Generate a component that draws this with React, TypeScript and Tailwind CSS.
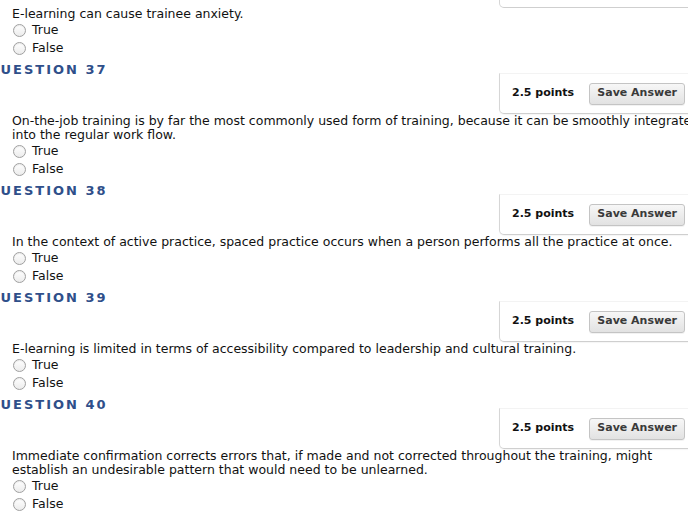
import React from "react";

type Q = { num: number; text: string[] };

const questions: Q[] = [
  {
    num: 37,
    text: [
      "On-the-job training is by far the most commonly used form of training, because it can be smoothly integrated",
      "into the regular work flow.",
    ],
  },
  {
    num: 38,
    text: [
      "In the context of active practice, spaced practice occurs when a person performs all the practice at once.",
    ],
  },
  {
    num: 39,
    text: [
      "E-learning is limited in terms of accessibility compared to leadership and cultural training.",
    ],
  },
  {
    num: 40,
    text: [
      "Immediate confirmation corrects errors that, if made and not corrected throughout the training, might",
      "establish an undesirable pattern that would need to be unlearned.",
    ],
  },
];

function Radio({ label, first }: { label: string; first?: boolean }) {
  return (
    <div className={`flex items-center h-[18px] pl-[13px] ${first ? "mt-[-1px]" : ""}`}>
      <span className="inline-block w-[13px] h-[13px] rounded-full border border-[#a0a0a0] bg-gradient-to-b from-[#ffffff] to-[#ececec] shadow-[inset_0_1px_1px_rgba(0,0,0,0.08)] shrink-0" />
      <span className="ml-[6px] leading-[18px]">{label}</span>
    </div>
  );
}

function QuestionText({ lines, top }: { lines: string[]; top?: boolean }) {
  return (
    <div className={`pl-[12px] leading-[14px] whitespace-nowrap ${top ? "mt-[-1px]" : ""}`}>
      {lines.map((l, i) => (
        <div key={i}>{l}</div>
      ))}
    </div>
  );
}

function PointsBox() {
  return (
    <div className="ml-[499px] mt-[-5px] h-[41px] w-[220px] border-l border-b border-t border-l-[#d6d6d6] border-b-[#cfcfcf] border-t-[#f3f3f3] rounded-bl-[5px] flex items-center pl-[12px] shadow-[0_1px_1px_rgba(0,0,0,0.04)]">
      <span className="font-bold text-[11px] text-[#111]">2.5 points</span>
      <button className="ml-[15px] h-[22px] w-[96px] rounded-[3px] border border-[#c4c4c4] bg-gradient-to-b from-[#f7f7f7] to-[#e2e2e2] font-bold text-[11px] text-[#3a3a3a] flex items-center justify-center shadow-[0_1px_0_rgba(0,0,0,0.05)]">
        Save Answer
      </button>
    </div>
  );
}

function Heading({ num }: { num: number }) {
  return (
    <div className="mt-[5px] h-[16px] leading-[16px] ml-[-12.5px] font-bold text-[13px] tracking-[2px] text-[#2f4f8a] whitespace-nowrap">
      QUESTION {num}
    </div>
  );
}

export default function App() {
  return (
    <div
      className="w-[688px] h-[528px] overflow-hidden bg-white text-[12.5px] text-[#111]"
      style={{ fontFamily: '"DejaVu Sans", "Liberation Sans", sans-serif' }}
    >
      <div className="ml-[499px] h-[8px] w-[220px] border-l border-b border-l-[#d6d6d6] border-b-[#cfcfcf] rounded-bl-[5px]" />
      <QuestionText lines={["E-learning can cause trainee anxiety."]} top />
      <Radio label="True" />
      <Radio label="False" />
      {questions.map((q) => (
        <div key={q.num}>
          <Heading num={q.num} />
          <PointsBox />
          <QuestionText lines={q.text} />
          <Radio label="True" />
          <Radio label="False" />
        </div>
      ))}
    </div>
  );
}
